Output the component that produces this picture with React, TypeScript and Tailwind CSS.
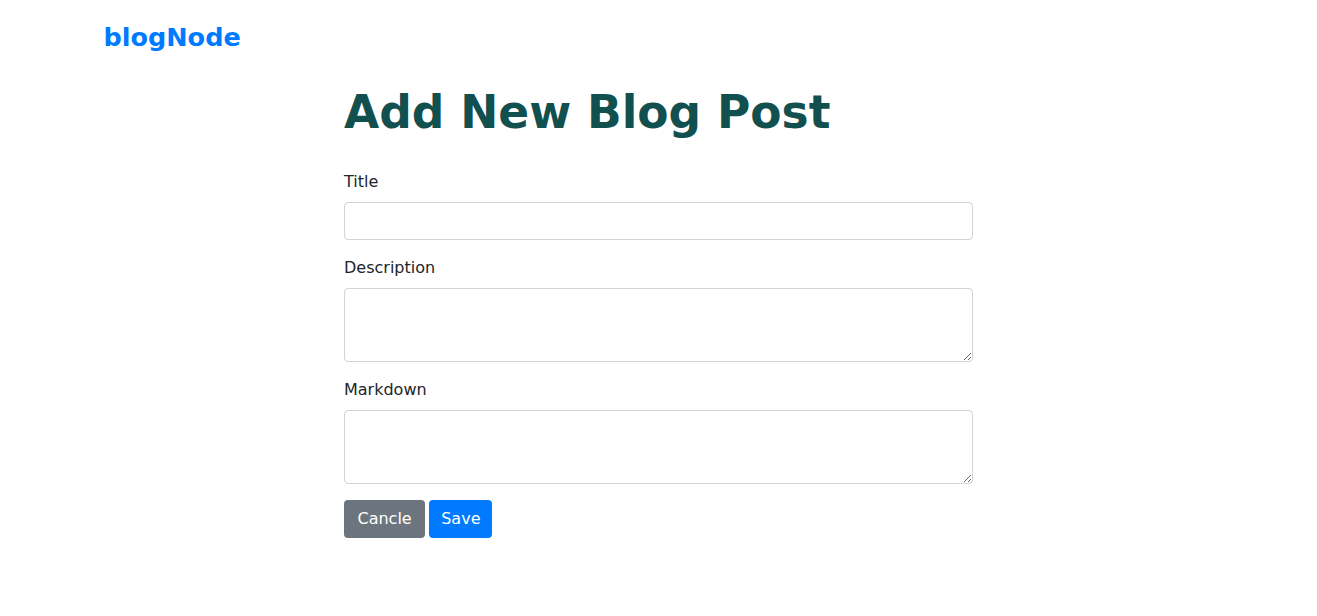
export default function App() {
  return (
    <div className="min-h-[616px] bg-white font-['DejaVu_Sans',sans-serif] text-[#212529]">
      <nav className="mx-auto w-[1140px] px-[15px] pt-[20px]">
        <a href="#" className="text-[25.5px] leading-[34px] font-bold text-[#007bff]">
          blogNode
        </a>
      </nav>

      <div className="mx-auto w-[629px] pt-[30px]">
        <h1 className="text-[45.5px] leading-[58px] font-bold text-[#124f4f]">
          Add New Blog Post
        </h1>

        <form className="mt-[28px]">
          <div className="mb-4">
            <label className="mb-2 block text-base leading-6">Title</label>
            <input
              type="text"
              className="block h-[38px] w-full rounded border border-[#ced4da] px-3"
            />
          </div>
          <div className="mb-4">
            <label className="mb-2 block text-base leading-6">Description</label>
            <textarea className="block h-[74px] w-full rounded border border-[#ced4da] px-3 py-1.5" />
          </div>
          <div className="mb-4">
            <label className="mb-2 block text-base leading-6">Markdown</label>
            <textarea className="block h-[74px] w-full rounded border border-[#ced4da] px-3 py-1.5" />
          </div>
          <div className="flex gap-1">
            <a
              href="#"
              className="inline-flex h-[38px] items-center rounded bg-[#6c757d] px-[13.5px] text-base text-white"
            >
              Cancle
            </a>
            <button
              type="submit"
              className="inline-flex h-[38px] items-center rounded bg-[#007bff] px-3 text-base text-white"
            >
              Save
            </button>
          </div>
        </form>
      </div>
    </div>
  );
}
